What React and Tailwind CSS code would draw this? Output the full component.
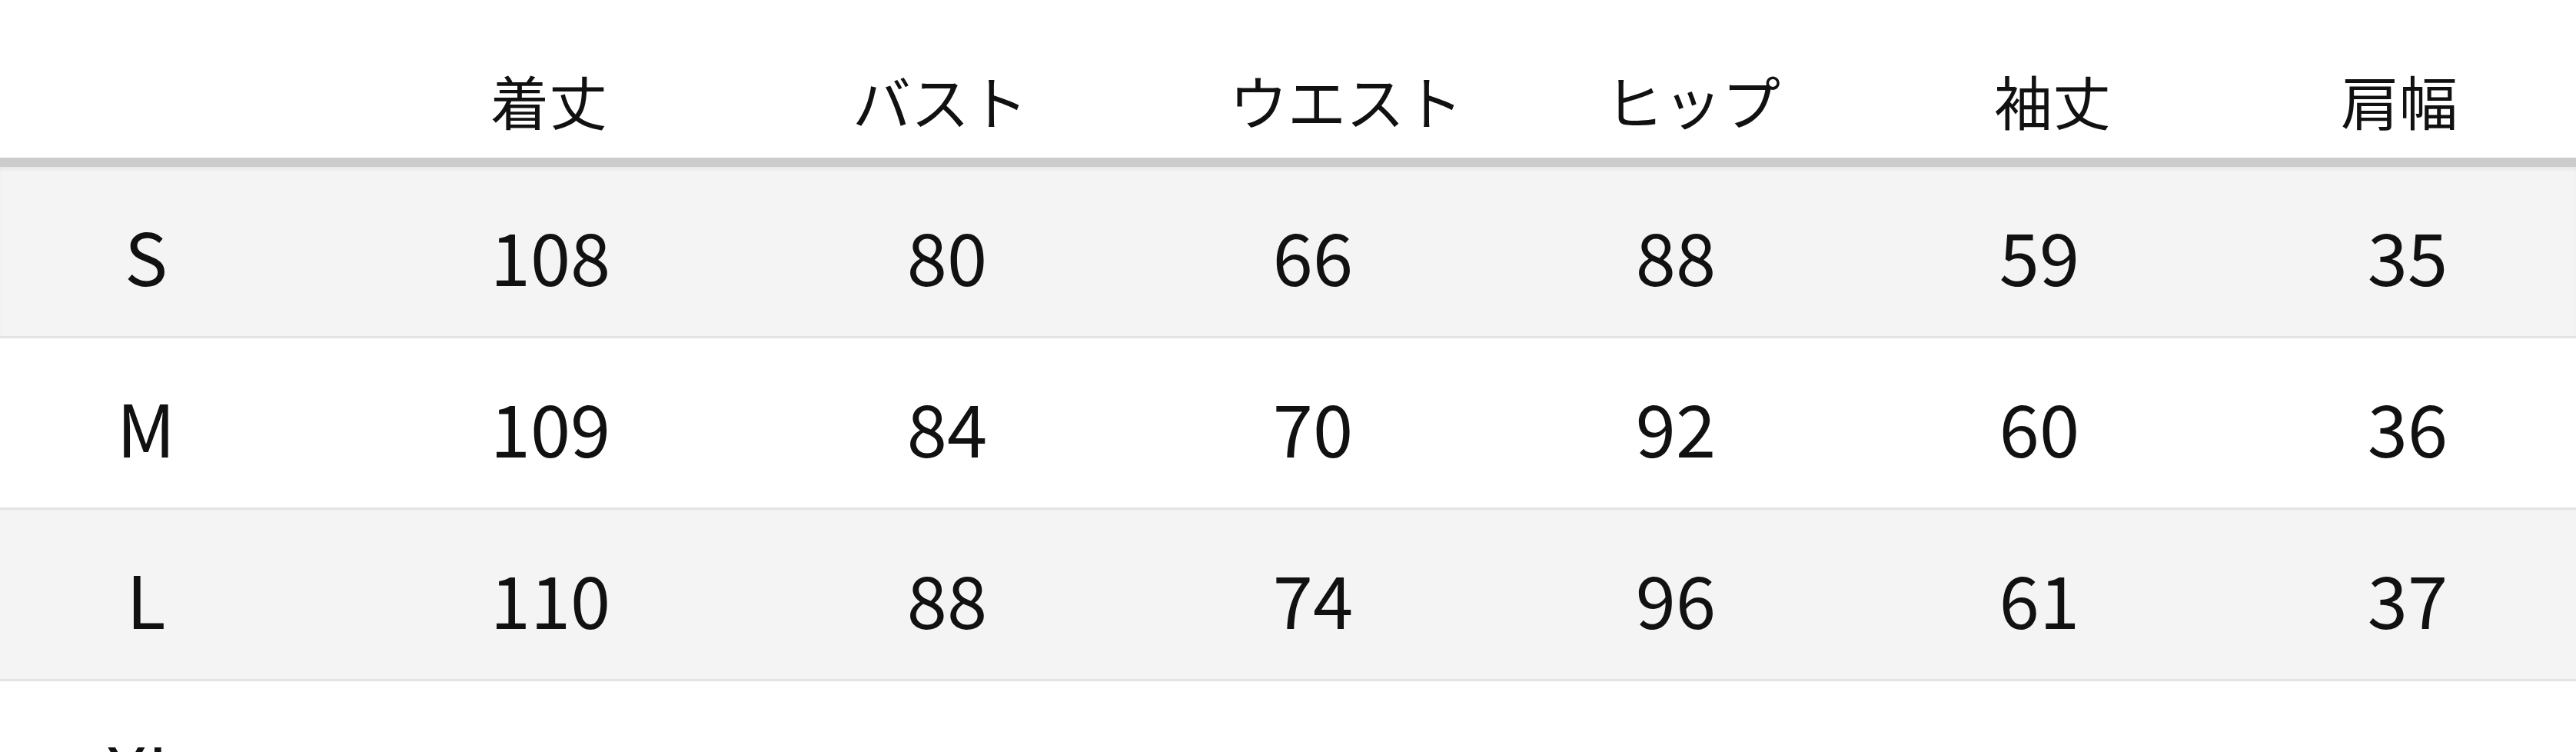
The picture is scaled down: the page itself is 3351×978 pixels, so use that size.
import React from "react";

const headers = ["着丈", "バスト", "ウエスト", "ヒップ", "袖丈", "肩幅"];
const rows = [
  { size: "S", vals: ["108", "80", "66", "88", "59", "35"], bg: "bg-[#f4f4f4]" },
  { size: "M", vals: ["109", "84", "70", "92", "60", "36"], bg: "bg-white" },
  { size: "L", vals: ["110", "88", "74", "96", "61", "37"], bg: "bg-[#f4f4f4]" },
  { size: "XL", vals: ["", "", "", "", "", ""], bg: "bg-white" },
];

export default function App() {
  return (
    <div
      className="w-[3351px] h-[978px] overflow-hidden bg-white text-[#111]"
      style={{ fontFamily: '"Noto Sans CJK JP", "Noto Sans", sans-serif' }}
    >
      <div className="h-[217px] border-b-[12px] border-[#cccccc] grid grid-cols-[380px_668px_350px_706px_196px_740px_162px] pt-[92px] text-[76px] leading-none">
        <div />
        {headers.map((h) => (
          <div key={h} className="flex justify-center whitespace-nowrap">
            {h}
          </div>
        ))}
      </div>
      {rows.map((r, i) => (
        <div
          key={r.size}
          className={`h-[223px] border-b-[3px] border-[#e3e3e3] ${r.bg} ${
            i === 0 ? "shadow-[inset_0_5px_5px_-2px_rgba(0,0,0,0.06)]" : ""
          } grid grid-cols-[380px_672px_360px_592px_352px_594px_364px] items-center pt-[8px] text-[94px] leading-none`}
        >
          <div className="flex justify-center whitespace-nowrap">{r.size}</div>
          {r.vals.map((v, j) => (
            <div key={j} className="flex justify-center whitespace-nowrap">
              {v}
            </div>
          ))}
        </div>
      ))}
    </div>
  );
}
